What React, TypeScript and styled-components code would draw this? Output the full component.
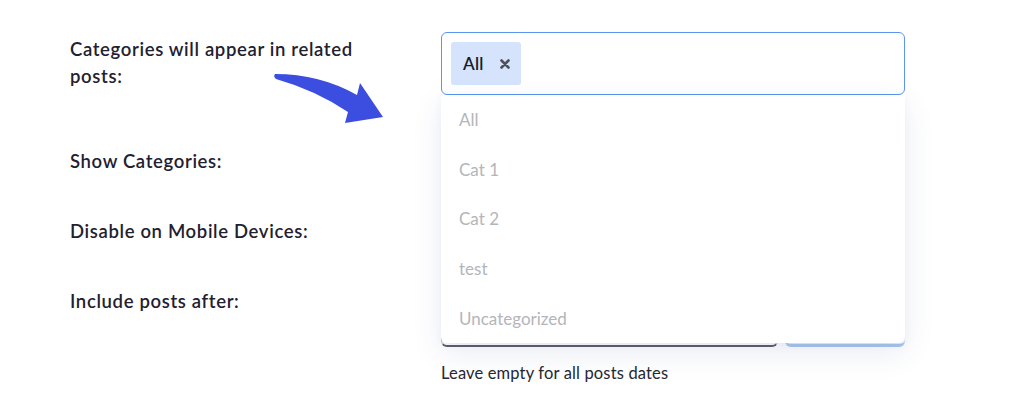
import styled, { createGlobalStyle } from "styled-components";

const GlobalStyle = createGlobalStyle`
  html, body {
    margin: 0;
    padding: 0;
    background: #ffffff;
  }
  body {
    font-family: Lato, "Open Sans", sans-serif;
    color: #1f2130;
  }
`;

const Page = styled.div`
  width: 1024px;
  height: 400px;
  box-sizing: border-box;
  padding: 32px 0 0 70px;
  position: relative;
  overflow: hidden;
`;

const Row = styled.div<{ $height?: number }>`
  display: grid;
  grid-template-columns: 371px 464px;
  align-items: start;
  min-height: ${(p) => (p.$height ? `${p.$height}px` : "auto")};
`;

const Label = styled.div`
  padding-top: 4px;
  font-size: 18.5px;
  letter-spacing: 0.65px;
  line-height: 27px;
  font-weight: 600;
  color: #1f2130;
  width: 300px;
`;

const Field = styled.div`
  position: relative;
`;

const SelectBox = styled.div`
  box-sizing: border-box;
  height: 63px;
  border: 1px solid #5a95f2;
  border-radius: 6px;
  padding: 9px;
  display: flex;
  align-items: flex-start;
  background: #fff;
`;

const Chip = styled.div`
  display: flex;
  align-items: center;
  gap: 16px;
  height: 43px;
  padding: 0 11px 0 12px;
  background: #d5e4fc;
  border-radius: 3px;
  font-size: 17px;
  font-weight: 600;
  letter-spacing: 0.3px;
  color: #1a1c28;
`;

const ChipRemove = styled.svg`
  display: block;
  color: #4f5159;
`;

const Dropdown = styled.ul`
  position: absolute;
  top: 63px;
  left: 0;
  right: 0;
  margin: 0;
  padding: 0;
  list-style: none;
  background: #fff;
  border-radius: 0 0 6px 6px;
  box-shadow: 0 10px 30px rgba(50, 70, 140, 0.1), 0 2px 8px rgba(50, 70, 140, 0.05);
  z-index: 5;
`;

const Option = styled.li`
  height: 49.6px;
  display: flex;
  align-items: center;
  padding-left: 18px;
  font-size: 17px;
  color: #b4b5ba;
`;

const DateRow = styled.div`
  display: flex;
  gap: 7px;
  margin-top: 21px;
  height: 42px;
`;

const DateInput = styled.div`
  flex: 1;
  border: 1px solid #c9cbd2;
  border-bottom: 2px solid #5c5e66;
  border-radius: 6px;
`;

const DateButton = styled.div`
  width: 120px;
  background: #e8f0fc;
  border-bottom: 3px solid #a9c8ee;
  border-radius: 6px;
`;

const Helper = styled.p`
  margin: 16px 0 0;
  font-size: 16.5px;
  letter-spacing: 0.15px;
  line-height: 20px;
  color: #262833;
`;

const Arrow = styled.svg`
  position: absolute;
  left: 270px;
  top: 68px;
  z-index: 6;
`;

const options = ["All", "Cat 1", "Cat 2", "test", "Uncategorized"];

const App = () => {
  return (
    <>
      <GlobalStyle />
      <Page>
        <Row $height={112}>
          <Label>Categories will appear in related posts:</Label>
          <Field>
            <SelectBox>
              <Chip>
                All
                <ChipRemove width="10" height="10" viewBox="0 0 10 10">
                  <path
                    d="M1.5,1.5 L8.5,8.5 M8.5,1.5 L1.5,8.5"
                    stroke="currentColor"
                    strokeWidth="2.6"
                    strokeLinecap="round"
                  />
                </ChipRemove>
              </Chip>
            </SelectBox>
            <Dropdown>
              {options.map((o) => (
                <Option key={o}>{o}</Option>
              ))}
            </Dropdown>
          </Field>
        </Row>
        <Row $height={70}>
          <Label>Show Categories:</Label>
          <Field />
        </Row>
        <Row $height={70}>
          <Label>Disable on Mobile Devices:</Label>
          <Field />
        </Row>
        <Row>
          <Label>Include posts after:</Label>
          <Field>
            <DateRow>
              <DateInput />
              <DateButton />
            </DateRow>
            <Helper>Leave empty for all posts dates</Helper>
          </Field>
        </Row>
        <Arrow width="120" height="60" viewBox="0 0 120 60">
          <path
            d="M5,6 Q50,6 87,27 L90,15 L113,49 L75,55 L78,44 Q45,22 6,11 Q3,8.5 5,6 Z"
            fill="#3b4ee0"
          />
        </Arrow>
      </Page>
    </>
  );
};

export default App;
